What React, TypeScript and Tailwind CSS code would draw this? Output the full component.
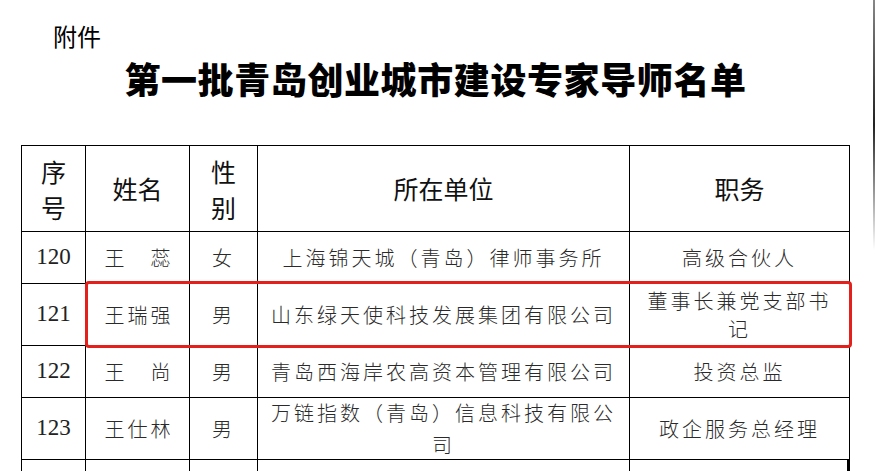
const cjk = "font-['Noto_Sans_CJK_SC',sans-serif]";
const serif = "font-['Liberation_Serif','Noto_Sans_CJK_SC',serif]";

type Row = {
  no: string;
  name: string;
  sex: string;
  unit: React.ReactNode;
  job: React.ReactNode;
  tall?: boolean;
};

const rows: Row[] = [
  { no: "120", name: "王　蕊", sex: "女", unit: "上海锦天城（青岛）律师事务所", job: "高级合伙人" },
  {
    no: "121",
    name: "王瑞强",
    sex: "男",
    unit: "山东绿天使科技发展集团有限公司",
    job: (
      <>
        董事长兼党支部书
        <br />记
      </>
    ),
    tall: true,
  },
  { no: "122", name: "王　尚", sex: "男", unit: "青岛西海岸农高资本管理有限公司", job: "投资总监" },
  {
    no: "123",
    name: "王仕林",
    sex: "男",
    unit: (
      <>
        万链指数（青岛）信息科技有限公
        <br />司
      </>
    ),
    job: "政企服务总经理",
    tall: true,
  },
];

const cell = "flex items-center justify-center text-center border-r border-b border-black";
const body = `${cjk} font-light text-[20px] tracking-[3px] text-[#2a2a2a]`;

export default function App() {
  return (
    <div className="relative w-[876px] h-[471px] overflow-hidden bg-white">
      {/* scan edge on the right */}
      <div className="absolute right-[1px] top-0 w-[2px] h-[250px] bg-gradient-to-b from-[#888] via-[#222] to-transparent" />

      <div className={`${cjk} pt-[24px] pl-[53px] text-[24px] leading-[24px] text-black`}>附件</div>

      <h1 className={`${cjk} mt-[10px] w-[829px] ml-[21px] text-center text-[36px] leading-[40px] font-black tracking-[0.6px] text-black`}>
        第一批青岛创业城市建设专家导师名单
      </h1>

      <div className="relative mt-[47px] ml-[21px] w-fit border-l border-t border-black">
        <div className="grid grid-cols-[64px_104px_68px_372px_220px]">
          {/* header */}
          <div className={`${cell} h-[86px] ${cjk} text-[25px] leading-[36px] text-[#111]`}>
            序<br />号
          </div>
          <div className={`${cell} h-[86px] ${cjk} text-[25px] text-[#111]`}>姓名</div>
          <div className={`${cell} h-[86px] ${cjk} text-[25px] leading-[36px] text-[#111]`}>
            性<br />别
          </div>
          <div className={`${cell} h-[86px] ${cjk} text-[25px] text-[#111]`}>所在单位</div>
          <div className={`${cell} h-[86px] ${cjk} text-[25px] text-[#111]`}>职务</div>

          {rows.map((r) => {
            const h = r.tall ? "h-[62px]" : "h-[52px]";
            return (
              <div key={r.no} className="contents">
                <div className={`${cell} ${h} ${serif} text-[23px] text-[#222]`}>{r.no}</div>
                <div className={`${cell} ${h} ${body}`}>
                  <span className="-mr-[3px]">{r.name}</span>
                </div>
                <div className={`${cell} ${h} ${body}`}>{r.sex}</div>
                <div className={`${cell} ${h} ${body} leading-[32px]`}>{r.unit}</div>
                <div className={`${cell} ${h} ${body} leading-[28px]`}>{r.job}</div>
              </div>
            );
          })}

          {/* partially visible next row */}
          <div className={`${cell} h-[52px]`} />
          <div className={`${cell} h-[52px]`} />
          <div className={`${cell} h-[52px]`} />
          <div className={`${cell} h-[52px]`} />
          <div className={`${cell} h-[52px] border-r-[3px]`} />
        </div>

        {/* highlight around row 121 */}
        <div className="absolute left-[63px] top-[135px] w-[767px] h-[67px] border-[3px] border-[#e3201b] rounded-[4px]" />
      </div>
    </div>
  );
}
